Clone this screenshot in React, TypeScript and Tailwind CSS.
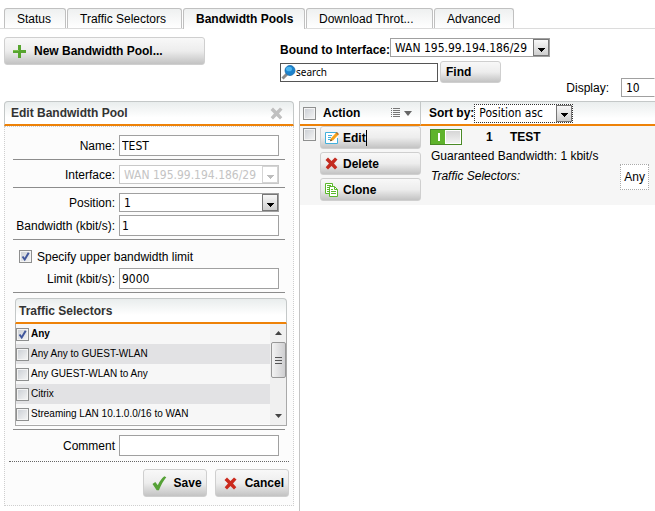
import { useState } from "react";
import type { ComponentProps, ReactNode } from "react";
import clsx from "clsx";

const tabs = [
  { name: "Status", width: "w-[62px]" },
  { name: "Traffic Selectors", width: "w-[115px]" },
  { name: "Bandwidth Pools", width: "w-[122px]" },
  { name: "Download Throt...", width: "w-[127px]" },
  { name: "Advanced", width: "w-20" },
];

const selectors = [
  "Any",
  "Any Any to GUEST-WLAN",
  "Any GUEST-WLAN to Any",
  "Citrix",
  "Streaming LAN 10.1.0.0/16 to WAN",
];

function Checkbox({ className, ...props }: ComponentProps<"input">) {
  return (
    <span className={clsx("relative block size-[13px] shrink-0", className)}>
      <input
        type="checkbox"
        className="peer block size-[13px] appearance-none border border-[#8e8f8f] bg-linear-to-br from-[#c9cdd3] to-[#f6f6f6] shadow-[inset_0_0_0_1px_#f4f4f4]"
        {...props}
      />
      <svg
        viewBox="0 0 13 13"
        className="pointer-events-none absolute inset-0 hidden size-[13px] peer-checked:block"
      >
        <path d="M3.5 6.5 5.7 9.5 9.7 2.8" fill="none" stroke="#41579c" strokeWidth="2" />
      </svg>
    </span>
  );
}

type SelectProps = ComponentProps<"select"> & { boxClass?: string; arrow?: boolean };

function Select({ boxClass, className, arrow = true, disabled, children, ...props }: SelectProps) {
  return (
    <span className={clsx("relative block h-[19px]", boxClass)}>
      <select
        disabled={disabled}
        className={clsx(
          "block h-full w-full appearance-none border bg-white pl-1 font-['DejaVu_Sans_Condensed','Noto_Sans',sans-serif] text-xs leading-4 font-normal outline-none",
          disabled ? "text-[#c4c4c4] opacity-100" : "text-black",
          className ?? "border-[#a0a0a0]",
        )}
        {...props}
      >
        {children}
      </select>
      {arrow && (
        <span
          className={clsx(
            "pointer-events-none absolute inset-y-px right-px flex w-4 items-center justify-center border",
            disabled
              ? "border-[#d4d4d4] bg-white text-[#bdbdbd]"
              : "border-[#777] bg-linear-to-b from-[#f8f8f8] to-[#cfcfcf] text-black",
          )}
        >
          <svg viewBox="0 0 7 4" className="mt-1 h-1 w-[7px]" shapeRendering="crispEdges">
            <path d="M0 0h7L3.5 4z" fill="currentColor" />
          </svg>
        </span>
      )}
    </span>
  );
}

function Button({ className, children, ...props }: ComponentProps<"button">) {
  return (
    <button
      type="button"
      className={clsx(
        "flex items-center rounded-[3px] border border-[#cfcfcf] bg-linear-to-b from-[#f8f8f8] via-[#ededed] via-50% to-[#c3c3c3] text-left font-bold whitespace-nowrap text-black",
        className,
      )}
      {...props}
    >
      {children}
    </button>
  );
}

function Rule() {
  return <hr className="mt-[3px] mr-2 mb-[5px] ml-2 border-t border-[#8c8c8c]" />;
}

function Field({ id, label, children }: { id: string; label: string; children: ReactNode }) {
  return (
    <div className="flex items-center pr-[14px]">
      <label htmlFor={id} className="w-[114px] shrink-0 pr-1 text-right whitespace-nowrap">
        {label}
      </label>
      <div className="min-w-0 flex-1">{children}</div>
    </div>
  );
}

function TextInput(props: ComponentProps<"input">) {
  return (
    <input
      type="text"
      className="block h-[21px] w-full border border-[#a0a0a0] bg-white px-0.5 font-['DejaVu_Sans_Condensed','Noto_Sans',sans-serif] text-xs outline-none"
      {...props}
    />
  );
}

function PlusIcon() {
  return (
    <svg viewBox="0 0 13 13" className="size-[13px]">
      <path d="M5 0h3v5h5v3H8v5H5V8H0V5h5z" fill="#57a52f" />
      <path d="M5 0h1v5H0v1h6V0z" fill="#7cc04f" />
    </svg>
  );
}

function CrossIcon({ className }: { className?: string }) {
  return (
    <svg viewBox="0 0 13 13" className={clsx("size-[13px]", className)}>
      <path
        d="M3 .5 6.5 4 10 .5 12.5 2.5 9 6.4 12.3 10.3 10 12.5 6.5 8.9 3 12.5.7 10.3 4 6.5.5 3z"
        fill="currentColor"
      />
    </svg>
  );
}

function TickIcon() {
  return (
    <svg viewBox="0 0 15 15" className="size-[15px]">
      <path
        d="M.5 8 3.3 6 5.8 9.2C7.4 5.6 9.6 2.400 12.300.3l2 .9C11.500 4.600 9 9 6.900 14.300H4.700z"
        fill="#55a136"
      />
    </svg>
  );
}

function EditIcon() {
  return (
    <svg viewBox="0 0 14 14" className="size-[14px]">
      <path d="M12.500 7v5.500H.5v-11h12" fill="#fff" stroke="#43b0dc" />
      <path d="M3 4.500h4M3 6.500h3M3 8.500h2" stroke="#43b0dc" />
      <path d="M5 10.300 6 7.200l5-5.500 2.300 2.100-5 5.500z" fill="#f6a21b" />
      <path d="m5 10.300.7-2.200 1.500 1.400z" fill="#4d4438" />
      <path d="m10.700 2.100 1-1.100L14 3.100l-1 1.100z" fill="#c4731b" />
    </svg>
  );
}

function CloneIcon() {
  return (
    <svg viewBox="0 0 14 14" className="size-[14px]" fill="#fff" stroke="#5cb82c">
      <path d="M.5.5h7v10h-7z" />
      <path d="M2 2.5h4M2 4.5h2M2 6.5h2M2 8.5h2" />
      <path d="M4.5 3.5h5l3 3v7h-8z" />
      <path d="M9.5 3.5v3h3M6 6.5h2M6 8.5h5M6 10.5h5" fill="none" />
    </svg>
  );
}

function SearchIcon() {
  return (
    <svg viewBox="0 0 15 15" className="size-[15px] shrink-0">
      <path d="M1.5 13.5 6 9" stroke="#8b8b8b" strokeWidth="3" />
      <circle cx="9" cy="5.5" r="5" fill="#1c83cd" stroke="#1769ab" strokeWidth=".8" />
      <ellipse cx="8" cy="4" rx="3" ry="2.3" fill="#4cb5ee" />
    </svg>
  );
}

function Toggle() {
  return (
    <button
      type="button"
      role="switch"
      aria-checked="true"
      aria-label="Enabled"
      className="flex h-4 w-8 items-center justify-between border border-[#4a8a26] bg-[#5fb32c] pl-[7px]"
    >
      <span className="h-2 w-0.5 bg-white" />
      <span className="h-full w-4 border border-white bg-linear-to-b from-[#d6d6d6] to-[#f2f2f2]" />
    </button>
  );
}

function EditPanel() {
  const [checked, setChecked] = useState<string[]>(["Any"]);

  const toggle = (name: string) => {
    setChecked((prev) => (prev.includes(name) ? prev.filter((n) => n !== name) : [...prev, name]));
  };

  return (
    <form className="w-[290px] shrink-0 self-start">
      <div className="flex h-[25px] items-center justify-between rounded-t-[4px] border-x border-t border-b-2 border-[#c4c8c8] border-b-[#ee8208] bg-linear-to-b from-[#e9eded] to-white to-70% pr-[10px] pl-[6px]">
        <h2 className="font-bold text-[#333]">Edit Bandwidth Pool</h2>
        <button type="button" aria-label="Close">
          <CrossIcon className="text-[#c0c0c0]" />
        </button>
      </div>

      <div className="border border-dotted border-[#cfcfcf] bg-[#fcfcfc] pt-2 pb-2">
        <Field id="name" label="Name:">
          <TextInput id="name" defaultValue="TEST" />
        </Field>
        <Rule />
        <Field id="interface" label="Interface:">
          <Select id="interface" disabled className="border-[#c8c8c8]">
            <option>WAN 195.99.194.186/29</option>
          </Select>
        </Field>
        <Rule />
        <div className="flex flex-col gap-[3px]">
          <Field id="position" label="Position:">
            <Select id="position">
              <option>1</option>
            </Select>
          </Field>
          <Field id="bandwidth" label="Bandwidth (kbit/s):">
            <TextInput id="bandwidth" defaultValue="1" />
          </Field>
        </div>
        <Rule />
        <div className="flex h-[23px] items-center gap-[5px] pl-[14px]">
          <Checkbox id="upper" defaultChecked />
          <label htmlFor="upper">Specify upper bandwidth limit</label>
        </div>
        <Field id="limit" label="Limit (kbit/s):">
          <TextInput id="limit" defaultValue="9000" />
        </Field>
        <Rule />

        <div className="mr-[6px] ml-[10px]">
          <h3 className="flex h-[26px] items-center rounded-t-[4px] border-x border-t border-b-2 border-[#c4c8c8] border-b-[#ee8208] bg-linear-to-b from-[#e9eded] to-white to-70% pl-[3px] font-bold text-[#333]">
            Traffic Selectors
          </h3>
          <div className="flex h-[102px] overflow-hidden border-x border-b border-[#a9a9a9]">
            <ul className="min-w-0 flex-1">
              {selectors.map((name) => (
                <li key={name} className="h-5 bg-[#f7f7f7] even:bg-[#e2e2e4]">
                  <label
                    className={clsx(
                      "flex h-5 items-center gap-0.5 text-[10px] whitespace-nowrap",
                      checked.includes(name) && "font-bold",
                    )}
                  >
                    <Checkbox checked={checked.includes(name)} onChange={() => toggle(name)} />
                    {name}
                  </label>
                </li>
              ))}
            </ul>
            <div className="flex w-4 flex-col items-center bg-[#f0f0f0] py-[7px]">
              <svg viewBox="0 0 7 4" className="h-1 w-[7px]">
                <path d="M0 4h7L3.5 0z" fill="#444" />
              </svg>
              <div className="mt-[7px] flex h-9 w-[15px] flex-col items-center justify-center gap-0.5 rounded-[2px] border border-[#979797] bg-linear-to-r from-[#f3f3f3] to-[#cfcfd1]">
                <span className="h-px w-[7px] bg-[#555]" />
                <span className="h-px w-[7px] bg-[#555]" />
                <span className="h-px w-[7px] bg-[#555]" />
              </div>
              <svg viewBox="0 0 7 4" className="mt-auto h-1 w-[7px]">
                <path d="M0 0h7L3.5 4z" fill="#444" />
              </svg>
            </div>
          </div>
        </div>

        <Rule />
        <Field id="comment" label="Comment">
          <TextInput id="comment" />
        </Field>
        <div className="mt-[5px] mr-1 ml-1 flex justify-end gap-2 border-t border-dotted border-[#666] pt-[7px]">
          <Button className="h-7 gap-[7px] pr-1 pl-2">
            <TickIcon />
            Save
          </Button>
          <Button className="h-7 gap-2 pr-1 pl-2">
            <CrossIcon className="text-[#cb2a1d]" />
            Cancel
          </Button>
        </div>
      </div>
    </form>
  );
}

function PoolTable() {
  return (
    <div className="min-w-0 flex-1 border-l border-[#c4c4c4]">
      <table className="w-full table-fixed border-separate border-spacing-0 text-left">
        <colgroup>
          <col className="w-5" />
          <col className="w-[101px]" />
          <col />
        </colgroup>
        <thead>
          <tr className="h-[25px] bg-linear-to-b from-[#e9eded] to-white to-70%">
            <th className="border-t border-b-2 border-t-[#c4c8c8] border-b-[#ee8208] p-0 pl-[3px]">
              <Checkbox aria-label="Select all" />
            </th>
            <th className="border-t border-r border-b-2 border-t-[#c4c8c8] border-r-[#c4c8c8] border-b-[#ee8208] p-0 pr-2 pl-[3px]">
              <div className="flex items-center justify-between">
                Action
                <button type="button" aria-label="Choose action" className="flex items-center gap-1">
                  <svg viewBox="0 0 9 10" className="h-[10px] w-[9px]" stroke="#777" shapeRendering="crispEdges">
                    <path d="M0 .5h1M0 2.5h1M0 4.5h1M0 6.5h1M0 8.5h1M2 .5h7M2 2.5h7M2 4.5h7M2 6.5h7M2 8.5h7" />
                  </svg>
                  <svg viewBox="0 0 8 5" className="h-[5px] w-2">
                    <path d="M0 0h8L4 5z" fill="#666" />
                  </svg>
                </button>
              </div>
            </th>
            <th className="border-t border-b-2 border-t-[#c4c8c8] border-b-[#ee8208] p-0 pl-2">
              <div className="flex items-center">
                <label htmlFor="sort">Sort by:</label>
                <Select id="sort" boxClass="w-[99px]" className="border-dotted border-[#333]">
                  <option>Position asc</option>
                </Select>
              </div>
            </th>
          </tr>
        </thead>
        <tbody>
          <tr className="bg-[#f6f6f6] align-top">
            <td className="p-0 pt-0.5 pl-[3px]">
              <Checkbox aria-label="Select TEST" />
            </td>
            <td className="p-0 pb-1">
              <div className="flex flex-col gap-[3px]">
                <Button className="h-[23px] gap-1 pl-1">
                  <EditIcon />
                  <span className="border-r border-black">Edit</span>
                </Button>
                <Button className="h-[23px] gap-[5px] pl-1">
                  <CrossIcon className="text-[#c32b20]" />
                  Delete
                </Button>
                <Button className="h-[23px] gap-1 pl-1">
                  <CloneIcon />
                  Clone
                </Button>
              </div>
            </td>
            <td className="p-0 pt-[3px] pr-[6px] pl-[9px]">
              <div className="flex items-center font-bold">
                <Toggle />
                <span className="w-12 pl-6">1</span>
                <span>TEST</span>
              </div>
              <p className="mt-[3px] pl-px leading-4">Guaranteed Bandwidth: 1 kbit/s</p>
              <div className="flex justify-between pl-px">
                <span className="pt-1 italic">Traffic Selectors:</span>
                <span className="flex h-[26px] items-center border border-dotted border-[#aaa] bg-white px-[3px]">
                  Any
                </span>
              </div>
            </td>
          </tr>
        </tbody>
      </table>
    </div>
  );
}

export default function App() {
  return (
    <div className="flex min-h-screen flex-col overflow-hidden bg-white font-['Liberation_Sans',Arial,sans-serif] text-xs leading-4 text-black">
      <nav className="flex gap-px border-b border-[#dcdcdc] pt-2 pl-1">
        {tabs.map((tab) => (
          <button
            key={tab.name}
            type="button"
            className={clsx(
              "rounded-t-[3px] border-x border-t border-[#c0c0c0] bg-linear-to-b from-[#eef0f0] to-white pl-3 text-left whitespace-nowrap",
              tab.width,
              tab.name === "Bandwidth Pools" ? "-mb-px h-[21px] font-bold" : "h-5",
            )}
          >
            {tab.name}
          </button>
        ))}
      </nav>

      <div className="flex h-[72px] items-start pt-2 pl-1">
        <Button className="h-7 w-[201px] shrink-0 gap-2 pl-2">
          <PlusIcon />
          New Bandwidth Pool...
        </Button>
        <div className="ml-[75px] shrink-0">
          <div className="flex items-center">
            <label htmlFor="bound" className="pt-[5px] font-bold">
              Bound to Interface:
            </label>
            <Select id="bound" boxClass="w-40">
              <option>WAN 195.99.194.186/29</option>
            </Select>
          </div>
          <div className="mt-[3px] flex items-center gap-0.5">
            <label className="flex h-[19px] w-[158px] items-center border border-[#555] bg-white">
              <SearchIcon />
              <input
                type="text"
                aria-label="Search"
                defaultValue="search"
                className="w-full min-w-0 font-['Noto_Sans',sans-serif] text-[10px] outline-none"
              />
            </label>
            <Button className="h-[22px] w-[61px] pl-[5px]">Find</Button>
          </div>
        </div>
        <div className="ml-auto flex items-center gap-3 self-end pb-1">
          <label htmlFor="display">Display:</label>
          <Select id="display" arrow={false} boxClass="w-[34px]" className="border-y-[#a0a0a0] border-r-white border-l-[#a0a0a0]">
            <option>10</option>
          </Select>
        </div>
      </div>

      <div className="flex flex-1 gap-[5px] pl-1">
        <EditPanel />
        <PoolTable />
      </div>
    </div>
  );
}
